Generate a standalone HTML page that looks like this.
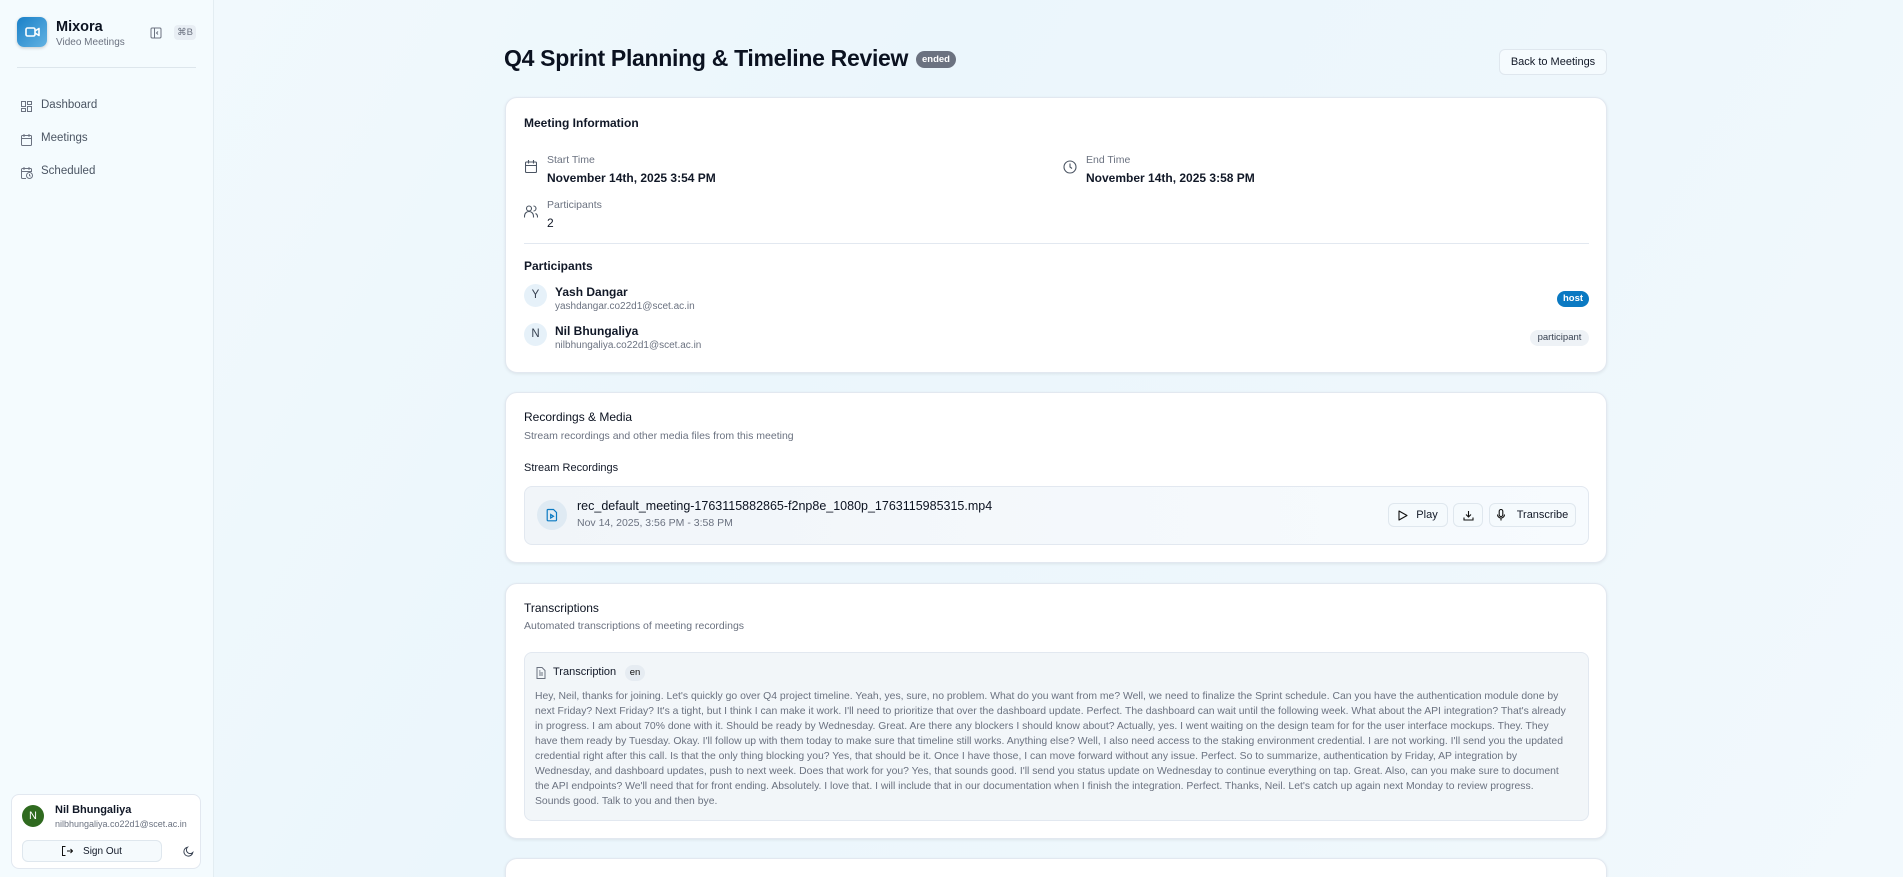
<!DOCTYPE html>
<html><head><meta charset="utf-8"><style>
*{box-sizing:border-box;margin:0;padding:0}
html{width:1903px;height:877px;overflow:hidden}
body{width:1903px;height:877px;overflow:hidden;font-family:"Liberation Sans",sans-serif;color:#0f172a;background:linear-gradient(120deg,#f3fafd 0%,#ebf6fc 40%,#eef7fc 70%,#f2f9fd 100%);position:relative}
.a{position:absolute;white-space:nowrap}
.sb{position:absolute;left:0;top:0;width:214px;height:877px;background:#f4fbfe;border-right:1px solid #e3edf2}
.card{position:absolute;left:505px;width:1102px;background:#fff;border:1px solid #e2e8f0;border-radius:12px;box-shadow:0 1px 3px rgba(0,0,0,.08)}
.h{font-size:12px;font-weight:bold;color:#111827}
.sub{font-size:10.5px;color:#6b7280}
.lab{font-size:10.5px;color:#6b7280}
.val{font-size:12px;font-weight:bold;color:#111827}
.btn{position:absolute;background:#f5fafd;border:1px solid #dfe7ee;border-radius:6px;font-size:11px;color:#111827;display:flex;align-items:center;justify-content:center;gap:8px}
svg{display:block}
</style></head><body>
<div class="sb">
 <div class="a" style="left:17px;top:17px;width:30px;height:30px;border-radius:7px;background:linear-gradient(135deg,#1a80c8,#62b2e2);box-shadow:0 1px 3px rgba(0,0,0,.2)"><svg width="30" height="30" viewBox="0 0 30 30"><rect x="9" y="11" width="9" height="8" rx="1.5" fill="none" stroke="#fff" stroke-width="1.6"/><path d="M18 14l4-2.5v7L18 16" fill="none" stroke="#fff" stroke-width="1.6" stroke-linejoin="round"/></svg></div>
 <div class="a" style="left:56px;top:19px;font-size:14.5px;font-weight:bold;color:#0b1220">Mixora</div>
 <div class="a" style="left:56px;top:37px;font-size:10px;color:#6b7280">Video Meetings</div>
 <div class="a" style="left:150px;top:27px"><svg width="12" height="12" viewBox="0 0 12 12"><rect x="1" y="1" width="10" height="10" rx="1.2" fill="none" stroke="#6b7280" stroke-width="1"/><path d="M4.5 1v10M8 4.5L6.5 6 8 7.5" fill="none" stroke="#6b7280" stroke-width="1"/></svg></div>
 <div class="a" style="left:174px;top:25px;width:22px;height:15px;background:#e8eef4;border-radius:4px;font-size:9.5px;color:#6b7280;text-align:center;line-height:15px">⌘B</div>
 <div class="a" style="left:17px;top:67px;width:179px;height:1px;background:#dde6ec"></div>
 <div class="a" style="left:21px;top:101px"><svg width="11" height="11" viewBox="0 0 11 11" fill="none" stroke="#6b7280" stroke-width="1"><rect x=".5" y=".5" width="4" height="5"/><rect x="6.5" y=".5" width="4" height="3"/><rect x="6.5" y="5.5" width="4" height="5"/><rect x=".5" y="7.5" width="4" height="3"/></svg></div>
 <div class="a" style="left:41px;top:99px;font-size:11.5px;color:#4b5563">Dashboard</div>
 <div class="a" style="left:21px;top:134px"><svg width="11" height="12" viewBox="0 0 11 12" fill="none" stroke="#6b7280" stroke-width="1"><rect x=".5" y="1.5" width="10" height="10" rx="1"/><path d="M3 0v3M8 0v3M.5 4.5h10"/></svg></div>
 <div class="a" style="left:41px;top:132px;font-size:11.5px;color:#4b5563">Meetings</div>
 <div class="a" style="left:21px;top:167px"><svg width="12" height="12" viewBox="0 0 12 12" fill="none" stroke="#6b7280" stroke-width="1"><path d="M5 11.5H1.5a1 1 0 0 1-1-1v-8a1 1 0 0 1 1-1h8a1 1 0 0 1 1 1V5M3 0v3M8 0v3M.5 4.5h10"/><circle cx="8.5" cy="8.5" r="3"/><path d="M8.5 7v1.5l1 .8"/></svg></div>
 <div class="a" style="left:41px;top:165px;font-size:11.5px;color:#4b5563">Scheduled</div>
 <div class="a" style="left:11px;top:794px;width:190px;height:75px;background:#fff;border:1px solid #e2e8f0;border-radius:8px">
  <div class="a" style="left:10px;top:10px;width:22px;height:22px;border-radius:50%;background:#2f6a1f;color:#fff;font-size:11px;text-align:center;line-height:22px">N</div>
  <div class="a" style="left:43px;top:9px;font-size:11px;font-weight:bold;color:#111827">Nil Bhungaliya</div>
  <div class="a" style="left:43px;top:24px;font-size:9px;color:#6b7280">nilbhungaliya.co22d1@scet.ac.in</div>
  <div class="btn" style="left:10px;top:45px;width:140px;height:22px;font-size:10px;gap:10px"><svg width="11" height="10" viewBox="0 0 11 10" fill="none" stroke="#111" stroke-width="1"><path d="M3.5 .5h-3v9h3M5 5h5.5M8.5 3l2 2-2 2"/></svg>Sign Out</div>
  <div class="a" style="left:171px;top:51px"><svg width="11" height="11" viewBox="0 0 11 11"><path d="M9.8 6.5A4.5 4.5 0 1 1 4.5 1.2 3.5 3.5 0 0 0 9.8 6.5z" fill="none" stroke="#374151" stroke-width="1"/></svg></div>
 </div>
</div>

<div class="a" style="left:504px;top:45px;font-size:23px;font-weight:bold;color:#0b1220;letter-spacing:-.3px">Q4 Sprint Planning &amp; Timeline Review</div>
<div class="a" style="left:916px;top:51px;width:40px;height:17px;border-radius:9px;background:#6b7280;color:#fff;font-size:9.5px;font-weight:bold;text-align:center;line-height:17px">ended</div>
<div class="btn" style="left:1499px;top:49px;width:108px;height:26px;background:#f5fbfe">Back to Meetings</div>

<div class="card" style="top:97px;height:276px">
 <div class="a h" style="left:18px;top:18px">Meeting Information</div>
 <div class="a" style="left:19px;top:62px"><svg width="12" height="13" viewBox="0 0 12 13" fill="none" stroke="#4b5563" stroke-width="1.1"><rect x=".5" y="2" width="11" height="10.5" rx="1"/><path d="M3.5 0v3.5M8.5 0v3.5M.5 5.5h11"/></svg></div>
 <div class="a lab" style="left:41px;top:56px">Start Time</div>
 <div class="a val" style="left:41px;top:73px">November 14th, 2025 3:54 PM</div>
 <div class="a" style="left:557px;top:62px"><svg width="14" height="14" viewBox="0 0 14 14" fill="none" stroke="#4b5563" stroke-width="1.1"><circle cx="7" cy="7" r="6"/><path d="M7 3.5V7l2 1.5"/></svg></div>
 <div class="a lab" style="left:580px;top:56px">End Time</div>
 <div class="a val" style="left:580px;top:73px">November 14th, 2025 3:58 PM</div>
 <div class="a" style="left:18px;top:107px"><svg width="14" height="13" viewBox="0 0 14 13" fill="none" stroke="#4b5563" stroke-width="1.1"><circle cx="5" cy="3.5" r="2.5"/><path d="M.5 12.5v-1.5a3.5 3.5 0 0 1 9 0v1.5M9.5 1a2.5 2.5 0 0 1 0 5M11.5 8.5a3.5 3.5 0 0 1 2 3v1"/></svg></div>
 <div class="a lab" style="left:41px;top:101px">Participants</div>
 <div class="a val" style="left:41px;top:118px;font-weight:normal">2</div>
 <div class="a" style="left:18px;top:145px;width:1065px;height:1px;background:#e2e8f0"></div>
 <div class="a h" style="left:18px;top:161px">Participants</div>
 <div class="a" style="left:18px;top:186px;width:23px;height:23px;border-radius:50%;background:#e6f1f9;font-size:11.5px;color:#374151;text-align:center;line-height:23px">Y</div>
 <div class="a val" style="left:49px;top:187px">Yash Dangar</div>
 <div class="a" style="left:49px;top:203px;font-size:10px;color:#6b7280">yashdangar.co22d1@scet.ac.in</div>
 <div class="a" style="left:1051px;top:193px;width:32px;height:16px;border-radius:8px;background:#0a79c2;color:#fff;font-size:9.5px;font-weight:bold;text-align:center;line-height:16px">host</div>
 <div class="a" style="left:18px;top:225px;width:23px;height:23px;border-radius:50%;background:#e6f1f9;font-size:11.5px;color:#374151;text-align:center;line-height:23px">N</div>
 <div class="a val" style="left:49px;top:226px">Nil Bhungaliya</div>
 <div class="a" style="left:49px;top:242px;font-size:10px;color:#6b7280">nilbhungaliya.co22d1@scet.ac.in</div>
 <div class="a" style="left:1024px;top:232px;width:59px;height:16px;border-radius:8px;background:#eef2f6;color:#374151;font-size:9.5px;text-align:center;line-height:16px">participant</div>
</div>

<div class="card" style="top:392px;height:171px">
 <div class="a h" style="left:18px;top:17px;font-weight:normal;color:#0b1220">Recordings &amp; Media</div>
 <div class="a sub" style="left:18px;top:37px">Stream recordings and other media files from this meeting</div>
 <div class="a" style="left:18px;top:69px;font-size:11px;color:#111827">Stream Recordings</div>
 <div class="a" style="left:18px;top:93px;width:1065px;height:59px;border:1px solid #e2e8f0;border-radius:8px;background:linear-gradient(90deg,#f1f5f9,#f7fbfe)">
  <div class="a" style="left:12px;top:13px;width:30px;height:30px;border-radius:50%;background:#dfeaf3"><svg width="30" height="30" viewBox="0 0 30 30" fill="none" stroke="#0a79c2" stroke-width="1.2"><path d="M11 9.5h5.5l3 3V20a.8.8 0 0 1-.8.8H11a.8.8 0 0 1-.8-.8v-9.7a.8.8 0 0 1 .8-.8z"/><path d="M13.7 14.5v3.5l2.8-1.75z"/></svg></div>
  <div class="a" style="left:52px;top:12px;font-size:12.5px;color:#0b1220">rec_default_meeting-1763115882865-f2np8e_1080p_1763115985315.mp4</div>
  <div class="a" style="left:52px;top:30px;font-size:10.5px;color:#6b7280">Nov 14, 2025, 3:56 PM - 3:58 PM</div>
 </div>
 <div class="btn" style="left:882px;top:110px;width:60px;height:24px"><svg width="10" height="11" viewBox="0 0 10 11"><path d="M1 1l8 4.5L1 10z" fill="none" stroke="#111" stroke-width="1.1" stroke-linejoin="round"/></svg>Play</div>
 <div class="btn" style="left:947px;top:110px;width:30px;height:24px"><svg width="11" height="11" viewBox="0 0 11 11" fill="none" stroke="#111" stroke-width="1.1"><path d="M5.5 1v6M3 4.5l2.5 2.5L8 4.5M1 7.5v2.5h9V7.5"/></svg></div>
 <div class="btn" style="left:983px;top:110px;width:87px;height:24px;gap:12px"><svg width="8" height="12" viewBox="0 0 8 12" fill="none" stroke="#111" stroke-width="1.1"><rect x="2.2" y=".5" width="3.6" height="7" rx="1.8"/><path d="M.5 5.5a3.5 3.5 0 0 0 7 0M4 9v2.5"/></svg>Transcribe</div>
</div>

<div class="card" style="top:583px;height:256px">
 <div class="a h" style="left:18px;top:17px;font-weight:normal;color:#0b1220">Transcriptions</div>
 <div class="a sub" style="left:18px;top:36px">Automated transcriptions of meeting recordings</div>
 <div class="a" style="left:18px;top:68px;width:1065px;height:169px;border:1px solid #e2e8f0;border-radius:8px;background:#f2f6f9">
  <div class="a" style="left:11px;top:14px"><svg width="10" height="12" viewBox="0 0 10 12" fill="none" stroke="#6b7280" stroke-width="1"><path d="M1 .5h5l3 3v8H1zM3 6h4M3 8h4M3 4h1.5"/></svg></div>
  <div class="a" style="left:28px;top:13px;font-size:11px;color:#111827">Transcription</div>
  <div class="a" style="left:100px;top:12px;width:20px;height:16px;border-radius:8px;background:#e6ecf2;font-size:9.5px;text-align:center;line-height:16px;color:#111">en</div>
  <div class="a" style="left:10px;top:36px;font-size:10.4px;line-height:15px;color:#6b7280">Hey, Neil, thanks for joining. Let's quickly go over Q4 project timeline. Yeah, yes, sure, no problem. What do you want from me? Well, we need to finalize the Sprint schedule. Can you have the authentication module done by<br>next Friday? Next Friday? It's a tight, but I think I can make it work. I'll need to prioritize that over the dashboard update. Perfect. The dashboard can wait until the following week. What about the API integration? That's already<br>in progress. I am about 70% done with it. Should be ready by Wednesday. Great. Are there any blockers I should know about? Actually, yes. I went waiting on the design team for for the user interface mockups. They. They<br>have them ready by Tuesday. Okay. I'll follow up with them today to make sure that timeline still works. Anything else? Well, I also need access to the staking environment credential. I are not working. I'll send you the updated<br>credential right after this call. Is that the only thing blocking you? Yes, that should be it. Once I have those, I can move forward without any issue. Perfect. So to summarize, authentication by Friday, AP integration by<br>Wednesday, and dashboard updates, push to next week. Does that work for you? Yes, that sounds good. I'll send you status update on Wednesday to continue everything on tap. Great. Also, can you make sure to document<br>the API endpoints? We'll need that for front ending. Absolutely. I love that. I will include that in our documentation when I finish the integration. Perfect. Thanks, Neil. Let's catch up again next Monday to review progress.<br>Sounds good. Talk to you and then bye.</div>
 </div>
</div>

<div class="card" style="top:858px;height:19px;border-bottom:none;border-radius:12px 12px 0 0"></div>
</body></html>
